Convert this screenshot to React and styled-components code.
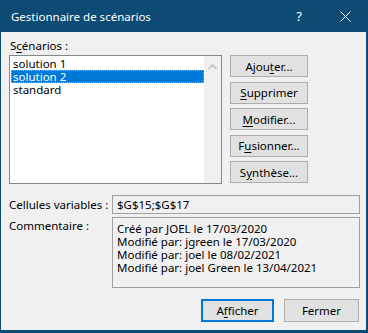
import React from "react";
import styled, { createGlobalStyle } from "styled-components";

const Global = createGlobalStyle`
  html, body { margin: 0; padding: 0; background: #0d4a74; }
  body { font-family: "Noto Sans", "Open Sans", sans-serif; }
`;

const BLUE = "#0d4a74";
const FONT = `"Noto Sans", "Open Sans", sans-serif`;

const Window = styled.div`
  box-sizing: border-box;
  width: 368px;
  height: 333px;
  background: #f0f0f0;
  border: solid ${BLUE};
  border-width: 0 2px 3px 1px;
  display: flex;
  flex-direction: column;
  font-family: ${FONT};
  font-size: 11.5px;
  color: #000;
`;

const TitleBar = styled.div`
  height: 32px;
  flex: none;
  background: ${BLUE};
  color: #fff;
  display: flex;
  align-items: center;
  padding-left: 11px;
  margin: 0 -2px 0 -1px;
`;

const Title = styled.div`
  flex: 1;
  font-size: 11.5px;
`;

const TitleButton = styled.div`
  width: 46px;
  height: 32px;
  display: flex;
  align-items: center;
  justify-content: center;
  font-size: 13px;
`;

const Body = styled.div`
  flex: 1;
  display: flex;
  flex-direction: column;
  padding: 6px 6px 0 8px;
`;

const Label = styled.div`
  line-height: 16px;
  height: 16px;
  margin: 0 0 1px ${(p) => p.$indent || 0}px;
`;

const U = styled.span`
  text-decoration: underline;
  text-underline-offset: 2px;
`;

const MainRow = styled.div`
  display: flex;
  height: 129px;
  gap: 8px;
`;

const ListBox = styled.div`
  box-sizing: border-box;
  width: 213px;
  height: 129px;
  border: 1px solid #828790;
  background: #fff;
  display: flex;
`;

const ListItems = styled.div`
  flex: 1;
  padding: 1px 0 0 1px;
`;

const Item = styled.div`
  box-sizing: border-box;
  height: 13px;
  line-height: 13px;
  padding-left: 2px;
  white-space: nowrap;
  ${(p) =>
    p.$selected
      ? `background:#0078d7;color:#fff;outline:1px dotted #f2a33a;outline-offset:-1px;`
      : ``}
`;

const ScrollBar = styled.div`
  width: 17px;
  background: #f0f0f0;
  display: flex;
  justify-content: center;
  padding-top: 8px;
  box-sizing: border-box;
`;

const ButtonCol = styled.div`
  width: 78px;
  display: flex;
  flex-direction: column;
  justify-content: space-between;
  padding-bottom: 1px;
`;

const Button = styled.div`
  box-sizing: border-box;
  width: ${(p) => p.$w || 78}px;
  height: ${(p) => p.$h || 22}px;
  background: #e1e1e1;
  border: ${(p) => (p.$default ? "2px solid #0078d7" : "1px solid #adadad")};
  display: flex;
  align-items: center;
  justify-content: center;
  white-space: nowrap;
`;

const FieldRow = styled.div`
  display: flex;
  margin-top: ${(p) => p.$mt}px;
`;

const FieldLabel = styled.div`
  width: 103px;
  flex: none;
  line-height: 13px;
  white-space: nowrap;
  padding-top: ${(p) => p.$pt}px;
`;

const Field = styled.div`
  box-sizing: border-box;
  width: 249px;
  height: ${(p) => p.$h}px;
  border: 1px solid #a0a0a0;
  background: #f0f0f0;
  padding: ${(p) => p.$pad};
  line-height: ${(p) => p.$lh || 13}px;
  white-space: nowrap;
`;

const Footer = styled.div`
  display: flex;
  justify-content: flex-end;
  gap: 10px;
  margin-top: 11px;
  margin-right: 1px;
`;

export default function App() {
  return (
    <>
      <Global />
      <Window>
        <TitleBar>
          <Title>Gestionnaire de scénarios</Title>
          <TitleButton>?</TitleButton>
          <TitleButton>
            <svg width="11" height="11" viewBox="0 0 11 11">
              <path d="M0.5 0.5 L10.5 10.5 M10.5 0.5 L0.5 10.5" stroke="#fff" strokeWidth="1" fill="none" />
            </svg>
          </TitleButton>
        </TitleBar>
        <Body>
          <Label $indent={1}>
            S<U>c</U>énarios :
          </Label>
          <MainRow>
            <ListBox>
              <ListItems>
                <Item>solution 1</Item>
                <Item $selected>solution 2</Item>
                <Item>standard</Item>
              </ListItems>
              <ScrollBar>
                <svg width="9" height="6" viewBox="0 0 9 6">
                  <path d="M0.5 5 L4.5 1 L8.5 5" stroke="#c2c2c2" strokeWidth="1.6" fill="none" />
                </svg>
              </ScrollBar>
            </ListBox>
            <ButtonCol>
              <Button>
                Ajou<U>t</U>er...
              </Button>
              <Button>
                <U>S</U>upprimer
              </Button>
              <Button>
                <U>M</U>odifier...
              </Button>
              <Button>
                F<U>u</U>sionner...
              </Button>
              <Button>
                S<U>y</U>nthèse...
              </Button>
            </ButtonCol>
          </MainRow>
          <FieldRow $mt={11}>
            <FieldLabel $pt={3}>Cellules variables :</FieldLabel>
            <Field $h={19} $pad="0 4px" $lh={17}>$G$15;$G$17</Field>
          </FieldRow>
          <FieldRow $mt={3}>
            <FieldLabel $pt={2}>Commentaire :</FieldLabel>
            <Field $h={71} $pad="4px 4px">
              Créé par JOEL le 17/03/2020
              <br />
              Modifié par: jgreen le 17/03/2020
              <br />
              Modifié par: joel le 08/02/2021
              <br />
              Modifié par: joel Green le 13/04/2021
            </Field>
          </FieldRow>
          <Footer>
            <Button $default $w={73} $h={23}>
              A<U>f</U>ficher
            </Button>
            <Button $w={75} $h={23}>
              Fermer
            </Button>
          </Footer>
        </Body>
      </Window>
    </>
  );
}
